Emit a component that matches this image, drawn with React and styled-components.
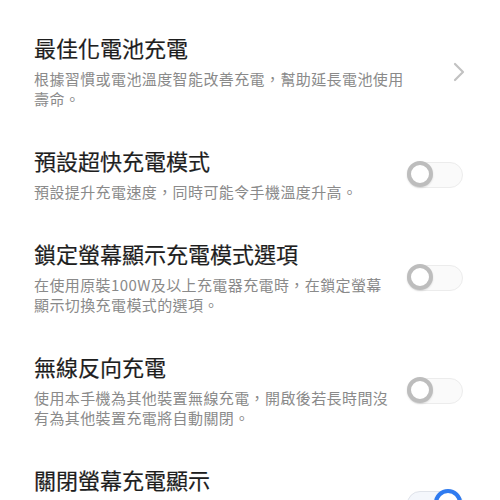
import React from 'react';
import styled, { createGlobalStyle } from 'styled-components';

const GlobalStyle = createGlobalStyle`
  html, body {
    margin: 0;
    padding: 0;
    background: #ffffff;
    font-family: "Noto Sans CJK TC", "Noto Sans", sans-serif;
  }
`;

const items = [
    {
        title: '最佳化電池充電',
        desc: '根據習慣或電池溫度智能改善充電，幫助延長電池使用壽命。',
        control: 'chevron',
    },
    {
        title: '預設超快充電模式',
        desc: '預設提升充電速度，同時可能令手機溫度升高。',
        control: 'off',
    },
    {
        title: '鎖定螢幕顯示充電模式選項',
        desc: '在使用原裝100W及以上充電器充電時，在鎖定螢幕顯示切換充電模式的選項。',
        control: 'off',
    },
    {
        title: '無線反向充電',
        desc: '使用本手機為其他裝置無線充電，開啟後若長時間沒有為其他裝置充電將自動關閉。',
        control: 'off',
    },
    {
        title: '關閉螢幕充電顯示',
        desc: '開啟後，熄滅螢幕充電時將不會顯示充電動畫及電量。',
        control: 'on',
    },
];

export default function App() {
    return (
        <>
            <GlobalStyle />
            <List>
                {items.map((item) => (
                    <Row key={item.title}>
                        <TextBlock $wide={item.control === 'chevron'}>
                            <Title>{item.title}</Title>
                            <Desc>{item.desc}</Desc>
                        </TextBlock>
                        {item.control === 'chevron' ? (
                            <Chevron viewBox="0 0 12 20">
                                <path d="M2 2 L10 10 L2 18" />
                            </Chevron>
                        ) : (
                            <Toggle $on={item.control === 'on'}>
                                <Knob $on={item.control === 'on'} />
                            </Toggle>
                        )}
                    </Row>
                ))}
            </List>
        </>
    );
}

const List = styled.div`
padding-top: 15px;
height: 500px;
overflow: hidden;
`

const Row = styled.div`
display: flex;
align-items: center;
padding: 19px 37px 19px 34px;
`

const TextBlock = styled.div`
flex: 1;
min-width: 0;
margin-right: ${(p) => (p.$wide ? '44px' : '16px')};
`

const Title = styled.div`
font-size: 22px;
line-height: 27px;
font-weight: 400;
color: #1e1e1e;
-webkit-text-stroke: 0.2px #1e1e1e;
`

const Desc = styled.div`
margin-top: 8px;
font-size: 15px;
letter-spacing: 0.4px;
line-height: 20px;
color: #8a8a8a;
`

const Chevron = styled.svg`
width: 12px;
height: 20px;
flex-shrink: 0;
margin-right: -2px;
path {
    fill: none;
    stroke: #c2c2c2;
    stroke-width: 2.2;
    stroke-linecap: round;
    stroke-linejoin: round;
}
`

const Toggle = styled.div`
position: relative;
width: 56px;
height: 26px;
flex-shrink: 0;
box-sizing: border-box;
border-radius: 13px;
border: 1.5px solid ${(p) => (p.$on ? '#dfe3ea' : '#ececec')};
background: ${(p) => (p.$on ? '#f4f7fc' : '#fafafa')};
`

const Knob = styled.div`
position: absolute;
top: ${(p) => (p.$on ? '-2.5px' : '-1.5px')};
left: ${(p) => (p.$on ? '26px' : '-1.5px')};
width: ${(p) => (p.$on ? '28px' : '26px')};
height: ${(p) => (p.$on ? '28px' : '26px')};
box-sizing: border-box;
border-radius: 50%;
background: #ffffff;
border: 4px solid ${(p) => (p.$on ? '#2f7bf0' : '#bdbdbd')};
box-shadow: 0 1px 2px rgba(0, 0, 0, 0.12);
`
